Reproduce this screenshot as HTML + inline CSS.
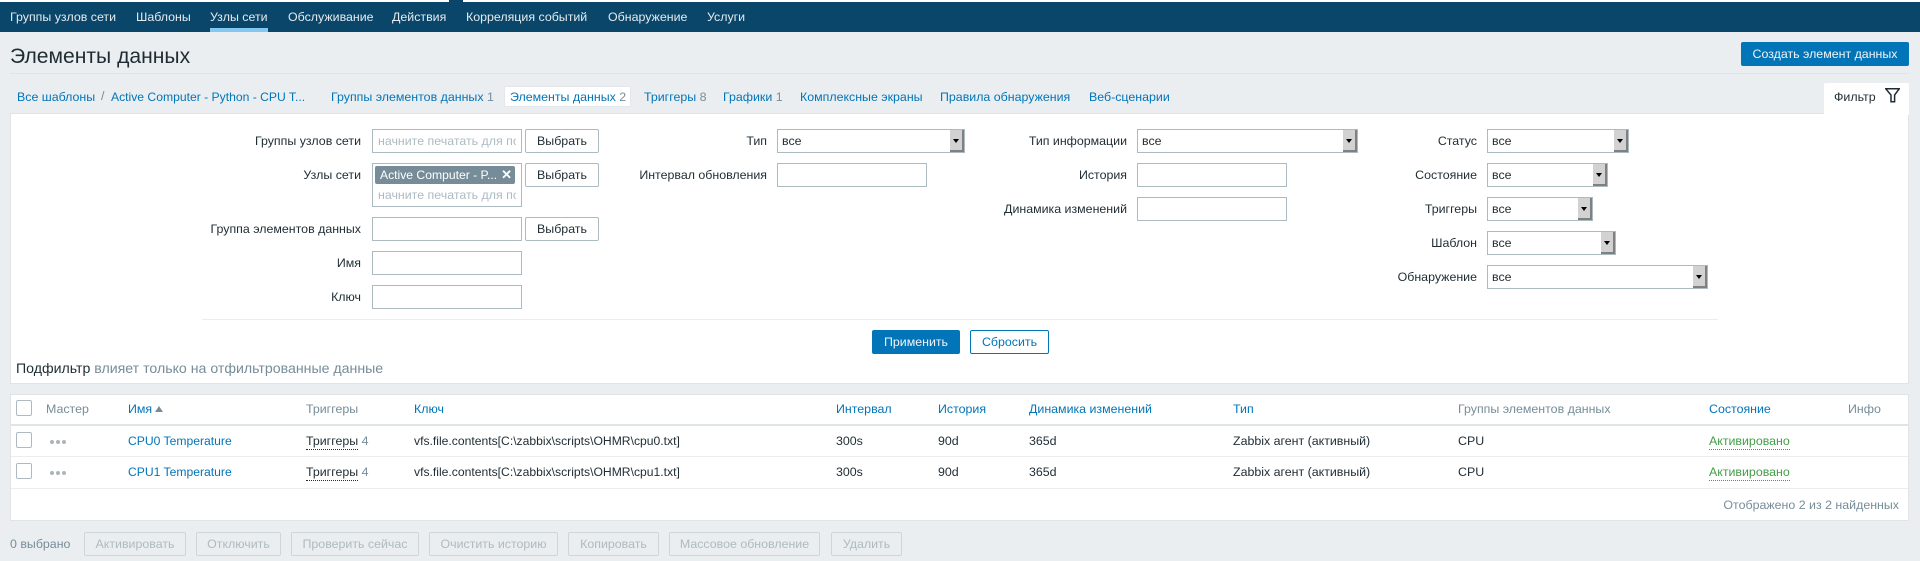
<!DOCTYPE html>
<html><head><meta charset="utf-8"><style>
*{box-sizing:border-box}
html,body{margin:0;padding:0}
body{width:1920px;height:561px;position:relative;overflow:hidden;background:#ebeef0;font:12.4px/14px "Liberation Sans","Noto Sans CJK SC",sans-serif;color:#1f2c33}
.t{position:absolute;white-space:nowrap;line-height:14px}
.r{position:absolute;white-space:nowrap;line-height:14px;text-align:right}
.n{color:#e4ebef;top:10px}
.a{color:#0275b8}
.g{color:#768d99}
.l{font-size:12.15px}
.b{position:absolute}
.i{position:absolute;height:24px;background:#fff;border:1px solid #acbbc2}
.btn{position:absolute;height:24px;background:#fff;border:1px solid #acbbc2;border-radius:2px;text-align:center;line-height:22px;color:#1f2c33}
.d{position:absolute;top:532px;height:24px;background:#ebeef0;border:1px solid #cdd6da;border-radius:2px;text-align:center;line-height:22px;color:#acbbc2}
.s{position:absolute;height:24px;background:#fff;border:1px solid #acbbc2;padding-left:4px;line-height:22px}
.s i{position:absolute;right:0;top:0;width:14px;height:22px;background:#d2d2d2;border-right:2px solid #808080;border-bottom:2px solid #808080}
.s i:after{content:"";position:absolute;left:3px;top:9px;border-left:3px solid transparent;border-right:3px solid transparent;border-top:4px solid #000}
.cb{position:absolute;left:16px;width:16px;height:16px;background:#fff;border:1px solid #acbbc2;border-radius:2px}
.dot{position:absolute;width:4px;height:4px;border-radius:50%;background:#acb5ba}
.u{border-bottom:1px dotted #1f2c33;padding-bottom:1px}
.ug{color:#429e47;border-bottom:1px dotted #429e47;padding-bottom:1px}
</style></head><body>
<div class="b" style="left:0;top:0;width:1920px;height:2px;background:#fff"></div>
<div class="b" style="left:0;top:2px;width:1920px;height:30px;background:#0a466a"></div>
<div class="b" style="left:449px;top:0;width:14px;height:2px;background:#0a466a"></div>
<div class="b" style="left:210px;top:28px;width:58px;height:4px;background:#84c8f0"></div>
<span class="t n" style="left:10px">Группы узлов сети</span>
<span class="t n" style="left:136px">Шаблоны</span>
<span class="t n" style="left:210px">Узлы сети</span>
<span class="t n" style="left:288px">Обслуживание</span>
<span class="t n" style="left:392px">Действия</span>
<span class="t n" style="left:466px">Корреляция событий</span>
<span class="t n" style="left:608px">Обнаружение</span>
<span class="t n" style="left:707px">Услуги</span>

<span class="t" style="left:10px;top:44px;font-size:21.1px;line-height:25px">Элементы данных</span>
<div class="b" style="left:1741px;top:42px;width:168px;height:24px;background:#0275b8;border-radius:2px;color:#f2f4f5;text-align:center;line-height:24px">Создать элемент данных</div>
<div class="b" style="left:10px;top:73px;width:1899px;height:1px;background:#dfe4e7"></div>

<span class="t a" style="left:17px;top:90px">Все шаблоны</span>
<span class="t g" style="left:101px;top:89px">/</span>
<span class="t a l" style="left:111px;top:90px">Active Computer - Python - CPU T...</span>
<span class="t a" style="left:331px;top:90px">Группы элементов данных <span class="g">1</span></span>
<div class="b" style="left:504px;top:86px;width:127px;height:21px;background:#fff;border:1px solid #e4e8ea"></div>
<span class="t a" style="left:510px;top:90px">Элементы данных <span class="g">2</span></span>
<span class="t a" style="left:644px;top:90px">Триггеры <span class="g">8</span></span>
<span class="t a" style="left:723px;top:90px">Графики <span class="g">1</span></span>
<span class="t a" style="left:800px;top:90px">Комплексные экраны</span>
<span class="t a" style="left:940px;top:90px">Правила обнаружения</span>
<span class="t a" style="left:1089px;top:90px">Веб-сценарии</span>

<div class="b" style="left:10px;top:113px;width:1899px;height:271px;background:#fff;border:1px solid #dfe4e7"></div>
<div class="b" style="left:1824px;top:83px;width:85px;height:32px;background:#fff;border-radius:2px 2px 0 0"></div>
<span class="t" style="left:1834px;top:90px">Фильтр</span>
<svg class="b" style="left:1885px;top:88px" width="15" height="15" viewBox="0 0 15 15"><path d="M0.8 0.8H14.2L9.6 7V13.8H6V7Z" fill="#fff" stroke="#1f2c33" stroke-width="1.5"/></svg>

<span class="r" style="right:1559px;top:134px">Группы узлов сети</span>
<div class="i" style="left:372px;top:129px;width:150px;color:#acbbc2;padding-left:5px;line-height:22px;overflow:hidden;white-space:nowrap"><span style="display:block;width:138px;overflow:hidden">начните печатать для поиска</span></div>
<div class="btn" style="left:525px;top:129px;width:74px">Выбрать</div>
<span class="r" style="right:1559px;top:168px">Узлы сети</span>
<div class="i" style="left:372px;top:163px;width:150px;height:44px"></div>
<div class="b" style="left:375px;top:166px;width:140px;height:18px;background:#768d99;border-radius:2px;color:#fff;line-height:18px;padding-left:5px;white-space:nowrap"><span class="l">Active Computer - P...</span><span style="position:absolute;right:3px;top:0;font-weight:bold;font-size:13px">✕</span></div>
<span class="t" style="left:378px;top:188px;color:#acbbc2;width:138px;overflow:hidden">начните печатать для поиска</span>
<div class="btn" style="left:525px;top:163px;width:74px">Выбрать</div>
<span class="r" style="right:1559px;top:222px">Группа элементов данных</span>
<div class="i" style="left:372px;top:217px;width:150px"></div>
<div class="btn" style="left:525px;top:217px;width:74px">Выбрать</div>
<span class="r" style="right:1559px;top:256px">Имя</span>
<div class="i" style="left:372px;top:251px;width:150px"></div>
<span class="r" style="right:1559px;top:290px">Ключ</span>
<div class="i" style="left:372px;top:285px;width:150px"></div>

<span class="r" style="right:1153px;top:134px">Тип</span>
<div class="s" style="left:777px;top:129px;width:188px">все<i></i></div>
<span class="r" style="right:1153px;top:168px">Интервал обновления</span>
<div class="i" style="left:777px;top:163px;width:150px"></div>

<span class="r" style="right:793px;top:134px">Тип информации</span>
<div class="s" style="left:1137px;top:129px;width:221px">все<i></i></div>
<span class="r" style="right:793px;top:168px">История</span>
<div class="i" style="left:1137px;top:163px;width:150px"></div>
<span class="r" style="right:793px;top:202px">Динамика изменений</span>
<div class="i" style="left:1137px;top:197px;width:150px"></div>

<span class="r" style="right:443px;top:134px">Статус</span>
<div class="s" style="left:1487px;top:129px;width:142px">все<i></i></div>
<span class="r" style="right:443px;top:168px">Состояние</span>
<div class="s" style="left:1487px;top:163px;width:121px">все<i></i></div>
<span class="r" style="right:443px;top:202px">Триггеры</span>
<div class="s" style="left:1487px;top:197px;width:106px">все<i></i></div>
<span class="r" style="right:443px;top:236px">Шаблон</span>
<div class="s" style="left:1487px;top:231px;width:129px">все<i></i></div>
<span class="r" style="right:443px;top:270px">Обнаружение</span>
<div class="s" style="left:1487px;top:265px;width:221px">все<i></i></div>

<div class="b" style="left:202px;top:319px;width:1516px;height:1px;background:#ebeef0"></div>
<div class="b" style="left:872px;top:330px;width:88px;height:24px;background:#0275b8;border-radius:2px;color:#f2f4f5;text-align:center;line-height:24px">Применить</div>
<div class="b" style="left:970px;top:330px;width:79px;height:24px;background:#fff;border:1px solid #0275b8;border-radius:2px;color:#0275b8;text-align:center;line-height:22px">Сбросить</div>
<span class="t" style="left:16px;top:360px;font-size:14.15px;line-height:16px">Подфильтр <span class="g">влияет только на отфильтрованные данные</span></span>

<div class="b" style="left:10px;top:394px;width:1899px;height:127px;background:#fff;border:1px solid #dfe4e7"></div>
<div class="b" style="left:11px;top:424px;width:1897px;height:2px;background:#dfe4e7"></div>
<div class="b" style="left:11px;top:456px;width:1897px;height:1px;background:#ebeef0"></div>
<div class="b" style="left:11px;top:488px;width:1897px;height:1px;background:#ebeef0"></div>

<div class="cb" style="top:400px"></div>
<span class="t g" style="left:46px;top:402px">Мастер</span>
<span class="t a" style="left:128px;top:402px">Имя</span>
<div class="b" style="left:155px;top:406px;border-left:4px solid transparent;border-right:4px solid transparent;border-bottom:6px solid #768d99"></div>
<span class="t g" style="left:306px;top:402px">Триггеры</span>
<span class="t a" style="left:414px;top:402px">Ключ</span>
<span class="t a" style="left:836px;top:402px">Интервал</span>
<span class="t a" style="left:938px;top:402px">История</span>
<span class="t a" style="left:1029px;top:402px">Динамика изменений</span>
<span class="t a" style="left:1233px;top:402px">Тип</span>
<span class="t g" style="left:1458px;top:402px">Группы элементов данных</span>
<span class="t a" style="left:1709px;top:402px">Состояние</span>
<span class="t g" style="left:1848px;top:402px">Инфо</span>

<div class="cb" style="top:432px"></div>
<div class="dot" style="left:50px;top:440px"></div><div class="dot" style="left:56px;top:440px"></div><div class="dot" style="left:62px;top:440px"></div>
<span class="t a l" style="left:128px;top:434px">CPU0 Temperature</span>
<span class="t" style="left:306px;top:434px"><span class="u">Триггеры</span> <span class="g">4</span></span>
<span class="t l" style="left:414px;top:434px">vfs.file.contents[C:\zabbix\scripts\OHMR\cpu0.txt]</span>
<span class="t" style="left:836px;top:434px">300s</span>
<span class="t" style="left:938px;top:434px">90d</span>
<span class="t" style="left:1029px;top:434px">365d</span>
<span class="t" style="left:1233px;top:434px">Zabbix агент (активный)</span>
<span class="t" style="left:1458px;top:434px">CPU</span>
<span class="t" style="left:1709px;top:434px"><span class="ug">Активировано</span></span>

<div class="cb" style="top:463px"></div>
<div class="dot" style="left:50px;top:471px"></div><div class="dot" style="left:56px;top:471px"></div><div class="dot" style="left:62px;top:471px"></div>
<span class="t a l" style="left:128px;top:465px">CPU1 Temperature</span>
<span class="t" style="left:306px;top:465px"><span class="u">Триггеры</span> <span class="g">4</span></span>
<span class="t l" style="left:414px;top:465px">vfs.file.contents[C:\zabbix\scripts\OHMR\cpu1.txt]</span>
<span class="t" style="left:836px;top:465px">300s</span>
<span class="t" style="left:938px;top:465px">90d</span>
<span class="t" style="left:1029px;top:465px">365d</span>
<span class="t" style="left:1233px;top:465px">Zabbix агент (активный)</span>
<span class="t" style="left:1458px;top:465px">CPU</span>
<span class="t" style="left:1709px;top:465px"><span class="ug">Активировано</span></span>

<span class="r g" style="right:21px;top:498px">Отображено 2 из 2 найденных</span>

<span class="t g" style="left:10px;top:537px">0 выбрано</span>
<div class="d" style="left:84px;width:102px">Активировать</div>
<div class="d" style="left:196px;width:85px">Отключить</div>
<div class="d" style="left:291px;width:128px">Проверить сейчас</div>
<div class="d" style="left:429px;width:129px">Очистить историю</div>
<div class="d" style="left:568px;width:91px">Копировать</div>
<div class="d" style="left:669px;width:151px">Массовое обновление</div>
<div class="d" style="left:831px;width:71px">Удалить</div>
</body></html>
